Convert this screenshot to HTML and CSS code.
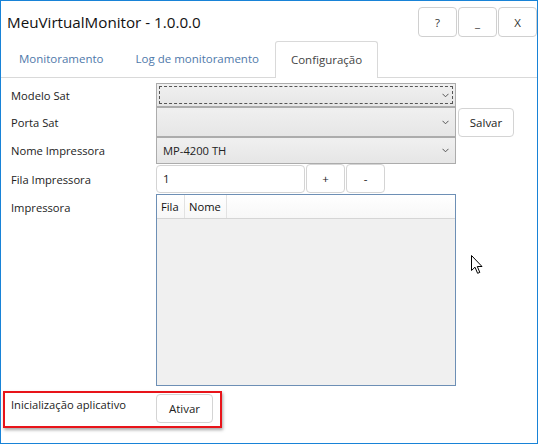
FILE: index.html
```html
<!DOCTYPE html>
<html lang="pt">
<head>
<meta charset="utf-8">
<title>MeuVirtualMonitor</title>
<link rel="stylesheet" href="styles.css">
</head>
<body>
<div class="window">
  <div class="titlebar">
    <div class="title">MeuVirtualMonitor - 1.0.0.0</div>
    <div class="caption-buttons">
      <button class="cap-btn">?</button>
      <button class="cap-btn">_</button>
      <button class="cap-btn">X</button>
    </div>
  </div>
  <div class="tabs">
    <div class="tab">Monitoramento</div>
    <div class="tab">Log de monitoramento</div>
    <div class="tab active">Configuração</div>
  </div>
  <div class="content">
    <div class="form">
      <div class="label r1">Modelo Sat</div>
      <div class="combo r1 focused"><span class="combo-text"></span><svg class="chev" width="7" height="5" viewBox="0 0 7 5"><path d="M0.5 0.8 L3.5 3.8 L6.5 0.8" fill="none" stroke="#555" stroke-width="1"/></svg><span class="focus-rect"></span></div>

      <div class="label r2">Porta Sat</div>
      <div class="combo r2"><span class="combo-text"></span><svg class="chev" width="7" height="5" viewBox="0 0 7 5"><path d="M0.5 0.8 L3.5 3.8 L6.5 0.8" fill="none" stroke="#555" stroke-width="1"/></svg></div>
      <div class="extra r2"><button class="btn salvar">Salvar</button></div>

      <div class="label r3">Nome Impressora</div>
      <div class="combo r3"><span class="combo-text">MP-4200 TH</span><svg class="chev" width="7" height="5" viewBox="0 0 7 5"><path d="M0.5 0.8 L3.5 3.8 L6.5 0.8" fill="none" stroke="#555" stroke-width="1"/></svg></div>

      <div class="label r4">Fila Impressora</div>
      <div class="fila-row r4">
        <div class="textbox">1</div>
        <button class="btn small">+</button>
        <button class="btn small">-</button>
      </div>

      <div class="label r5 top">Impressora</div>
      <div class="listview r5">
        <div class="lv-header">
          <div class="lv-col c1">Fila</div>
          <div class="lv-col c2">Nome</div>
        </div>
        <div class="lv-body"></div>
      </div>

      <div class="label r6">Inicialização aplicativo</div>
      <div class="r6 ativar-cell"><button class="btn ativar">Ativar</button></div>
    </div>
  </div>
  <div class="highlight"></div>
  <svg class="cursor" width="13" height="20" viewBox="0 0 13 20"><path d="M0.5 0.5 L0.5 15.5 L4 12.2 L6.6 18.3 L8.8 17.4 L6.3 11.5 L11 11.5 Z" fill="#fff" stroke="#000" stroke-width="1" stroke-linejoin="round"/></svg>
</div>
</body>
</html>
```
FILE: styles.css
```css
* { box-sizing: border-box; }
html, body { margin: 0; padding: 0; background: #fff; }
body {
  font-family: "Open Sans", "Noto Sans", "Liberation Sans", sans-serif;
  color: #222;
}
.window {
  position: relative;
  width: 538px;
  height: 444px;
  border: 1px solid #1883d7;
  background: #fff;
  overflow: hidden;
}
.titlebar {
  height: 40px;
  display: flex;
  align-items: flex-start;
  justify-content: space-between;
  padding: 6px 0 0 6px;
}
.title {
  font-size: 15.2px;
  line-height: 20px;
  margin-top: 5px;
  color: #111;
}
.caption-buttons { display: flex; gap: 1px; }
.cap-btn {
  width: 39px;
  height: 30px;
  background: #fff;
  border: 1px solid #d0d0d0;
  border-radius: 4px;
  font-family: inherit;
  font-size: 11.5px;
  color: #333;
  padding: 0;
}
.tabs {
  height: 37px;
  display: flex;
  align-items: flex-end;
  padding-left: 2px;
  border-bottom: 1px solid #d9d9d9;
}
.tab {
  height: 36px;
  padding: 0 16px;
  font-size: 11.5px;
  line-height: 36px;
  color: #4f79aa;
  white-space: nowrap;
}
.tab.active {
  color: #444;
  background: #fff;
  border: 1px solid #d9d9d9;
  border-bottom: none;
  border-radius: 3px 3px 0 0;
  height: 37px;
  margin-bottom: -1px;
  padding: 0 15px;
  line-height: 36px;
}
.content {
  padding: 5px 0 0 10px;
}
.form {
  display: grid;
  grid-template-columns: 145px 300px auto;
  grid-template-rows: 24px 30px 27px 30px 192px 36px;
  font-size: 11.2px;
}
.label {
  grid-column: 1;
  display: flex;
  align-items: center;
  white-space: nowrap;
  color: #222;
}
.label.top { align-items: flex-start; padding-top: 6px; }
.r1 { grid-row: 1; }
.r2 { grid-row: 2; }
.r3 { grid-row: 3; }
.r4 { grid-row: 4; }
.r5 { grid-row: 5; }
.r6 { grid-row: 6; }
.combo {
  grid-column: 2;
  position: relative;
  display: flex;
  align-items: center;
  justify-content: space-between;
  padding: 0 5px 0 6px;
  border: 1px solid #acacac;
  background: linear-gradient(#f0f0f0, #e6e6e6);
}
.combo-text { color: #222; }
.chev { margin-right: 1px; }
.focus-rect {
  position: absolute;
  left: 2px; top: 2px; right: 2px; bottom: 2px;
  border: 1px dashed #555;
}
.extra {
  grid-column: 3;
  padding: 1px 0 0 2px;
}
.btn {
  font-family: inherit;
  font-size: 11.5px;
  color: #222;
  background: #fff;
  border: 1px solid #d4d4d4;
  border-radius: 4px;
  padding: 0;
}
.salvar { width: 56px; height: 29px; }
.fila-row {
  grid-column: 2 / 4;
  display: flex;
  align-items: flex-start;
}
.textbox {
  margin-top: 1px;
  width: 149px;
  height: 28px;
  border: 1px solid #d4d4d4;
  border-radius: 4px;
  padding-left: 6px;
  line-height: 26px;
  font-size: 11.5px;
  color: #222;
}
.btn.small {
  width: 39px;
  height: 29px;
  margin-left: 1px;
}
.listview {
  grid-column: 2;
  border: 1px solid #6d8fb5;
  display: flex;
  flex-direction: column;
}
.lv-header {
  height: 24px;
  display: flex;
  background: linear-gradient(#ffffff, #f7f7f7);
  border-bottom: 1px solid #d5d5d5;
}
.lv-col {
  padding: 0 4px;
  line-height: 23px;
  border-right: 1px solid #e2e2e2;
  color: #111;
}
.lv-col.c1 { width: 28px; }
.lv-col.c2 { width: 42px; }
.lv-body { flex: 1; background: #f0f0f0; }
.ativar-cell {
  grid-column: 2;
  padding-top: 8px;
}
.ativar { width: 57px; height: 29px; }
.highlight {
  position: absolute;
  left: 2px;
  top: 390px;
  width: 219px;
  height: 37px;
  border: 2px solid #e8141a;
  box-shadow: 1px 2px 3px rgba(0,0,0,0.35);
}
.cursor {
  position: absolute;
  left: 470px;
  top: 254px;
}
```
